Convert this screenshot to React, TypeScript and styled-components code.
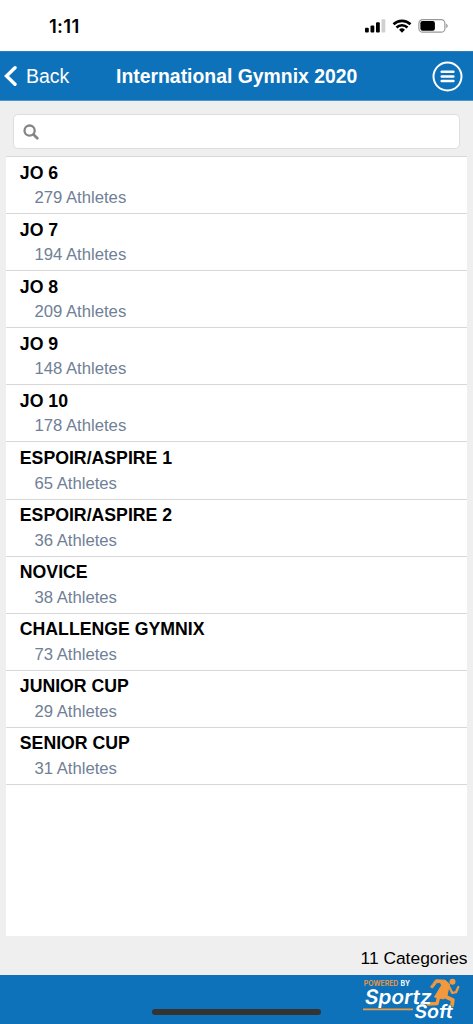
import React from "react";
import styled, { createGlobalStyle } from "styled-components";

const GlobalStyle = createGlobalStyle`
  * { box-sizing: border-box; }
  body { margin: 0; background: #efefef; }
`;

const Screen = styled.div`
  width: 473px;
  height: 1024px;
  display: flex;
  flex-direction: column;
  overflow: hidden;
  background: #efefef;
  font-family: "Liberation Sans", Arial, sans-serif;
  color: #000;
`;

const StatusBar = styled.div`
  flex: none;
  height: 51px;
  display: flex;
  justify-content: space-between;
  padding: 15px 24px 0 49px;
  background: #fff;
`;

const Clock = styled.span`
  font: 600 18.5px/22px Inter, sans-serif;
  letter-spacing: 0.3px;
`;

const StatusIcons = styled.svg`
  display: block;
  width: 85px;
  height: 22px;
`;

const NavBar = styled.header`
  flex: none;
  height: 50px;
  display: flex;
  align-items: center;
  background: #0d72b9;
  border-top: 1px solid #2f7db5;
  border-bottom: 1px solid #4b97cc;
  color: #fff;
`;

const BackButton = styled.button`
  width: 116px;
  display: flex;
  align-items: center;
  gap: 9px;
  padding: 0 0 0 4px;
  border: 0;
  background: none;
  color: inherit;
  font: 19.5px/24px "Liberation Sans", Arial, sans-serif;
`;

const Title = styled.h1`
  flex: 1;
  margin: 0;
  white-space: nowrap;
  font-size: 19.4px;
  line-height: 24px;
  font-weight: 700;
`;

const MenuButton = styled.button`
  margin: 0 10px 0 0;
  padding: 0;
  border: 0;
  background: none;
  line-height: 0;
`;

const SearchArea = styled.div`
  flex: none;
  height: 55px;
  padding: 13px 13px 0;
`;

const SearchBox = styled.label`
  height: 35px;
  display: flex;
  align-items: center;
  padding-left: 9px;
  background: #fff;
  border: 1px solid #dedede;
  border-radius: 5px;
`;

const List = styled.ul`
  flex: none;
  height: 780px;
  margin: 0 6px;
  padding: 0;
  list-style: none;
  background: #fff;
  border-top: 1px solid #d8d8d8;
`;

const Row = styled.li`
  height: 57.1px;
  padding: 4.5px 0 0 13.8px;
  border-bottom: 1px solid #d8d8d8;
`;

const Name = styled.div`
  font-size: 17.7px;
  line-height: 22px;
  font-weight: 700;
`;

const Count = styled.div`
  padding: 4.6px 0 0 14.6px;
  font-size: 16.7px;
  line-height: 20px;
  color: #708096;
`;

const Summary = styled.div`
  flex: none;
  height: 39px;
  padding: 11px 5.5px 0 0;
  text-align: right;
  font-size: 17.4px;
  line-height: 22px;
`;

const Footer = styled.footer`
  flex: none;
  position: relative;
  height: 49px;
  display: flex;
  justify-content: flex-end;
  padding-right: 11px;
  background: #0d72b9;
`;

const HomeIndicator = styled.div`
  position: absolute;
  left: 152px;
  bottom: 9px;
  width: 169px;
  height: 6px;
  border-radius: 3px;
  background: #333;
`;

const categories: [string, number][] = [
  ["JO 6", 279],
  ["JO 7", 194],
  ["JO 8", 209],
  ["JO 9", 148],
  ["JO 10", 178],
  ["ESPOIR/ASPIRE 1", 65],
  ["ESPOIR/ASPIRE 2", 36],
  ["NOVICE", 38],
  ["CHALLENGE GYMNIX", 73],
  ["JUNIOR CUP", 29],
  ["SENIOR CUP", 31],
];

const PhoneStatus = () => (
  <StatusIcons viewBox="0 0 85 22">
    <rect x="1" y="12.7" width="3.8" height="4.8" rx="1" />
    <rect x="6.5" y="10.5" width="3.8" height="7" rx="1" />
    <rect x="12" y="7.2" width="3.8" height="10.3" rx="1" />
    <rect x="17.5" y="4.3" width="3.8" height="13.2" rx="1" fill="#d0d0d0" />
    <g fill="none" stroke="#000" strokeWidth="2.6">
      <path d="M29.5 9.3a12.2 12.2 0 0 1 17 0" />
      <path d="M32.5 12.5a7.9 7.9 0 0 1 11 0" />
    </g>
    <path d="M38 17.7l-2.9-3a4.2 4.2 0 0 1 5.8 0z" />
    <rect x="54.9" y="4.6" width="26" height="12.6" rx="3.8" fill="#fff" stroke="#999" strokeWidth="1.2" />
    <rect x="56.4" y="6.1" width="14.5" height="9.6" rx="2.2" />
    <path d="M82.2 8.7c2 .7 2 3.7 0 4.4z" fill="#999" />
  </StatusIcons>
);

const Logo = () => (
  <svg width="102" height="49" viewBox="0 0 102 49">
    <g fill="#f2993d" stroke="#f2993d" strokeLinejoin="round" strokeLinecap="round">
      <circle cx="92.5" cy="6.8" r="3" stroke="none" />
      <path d="M76 4.8L85 5.2L89.5 9L87 20.5L83.5 24L74.5 22L81.5 10.5L80.5 7.6L76.8 7.6L72.5 13L70.8 12.2Z" strokeWidth="1" />
      <path d="M88.5 10.5L92.3 18L96 17.2L98.3 12" fill="none" strokeWidth="2.3" />
      <path d="M83 20.5L92.8 25L92 30.5" fill="none" strokeWidth="3.8" />
      <path d="M78.5 22.5L77 28.5L68 29" fill="none" strokeWidth="3.4" />
    </g>
    <path d="M3 34.3H53" stroke="#f2993d" strokeWidth="1.7" />
    <text x="3.8" y="11.3" fill="#f2993d" fontFamily="Inter, sans-serif" fontSize="7" fontWeight="600" textLength="34.5" lengthAdjust="spacingAndGlyphs">POWERED</text>
    <text x="40.5" y="11.3" fill="#fff" fontFamily="Inter, sans-serif" fontSize="7" fontWeight="700" textLength="9.5" lengthAdjust="spacingAndGlyphs">BY</text>
    <g fill="#fff" fontFamily="Inter, sans-serif" fontWeight="600">
      <text transform="translate(4 28.8) skewX(-9)" fontSize="20" textLength="67" lengthAdjust="spacingAndGlyphs">Sportz</text>
      <text transform="translate(53.5 43.3) skewX(-9)" fontSize="18.5" textLength="38.5" lengthAdjust="spacingAndGlyphs" stroke="#0d72b9" strokeWidth="1" paintOrder="stroke">Soft</text>
    </g>
  </svg>
);

export default function App() {
  return (
    <>
      <GlobalStyle />
      <Screen>
        <StatusBar>
          <Clock>1:11</Clock>
          <PhoneStatus />
        </StatusBar>
        <NavBar>
          <BackButton>
            <svg width="13" height="22" viewBox="0 0 13 22">
              <path d="M11 2.7L2.5 11L11 19.3" fill="none" stroke="#fff" strokeWidth="3.4" strokeLinecap="round" />
            </svg>
            Back
          </BackButton>
          <Title>International Gymnix 2020</Title>
          <MenuButton aria-label="Menu">
            <svg width="31" height="31" viewBox="0 0 31 31" fill="none" stroke="#fff">
              <circle cx="15.5" cy="15.5" r="14" strokeWidth="2" />
              <path d="M9.7 10.7H21.4M9.7 15.4H21.4M9.7 20.1H21.4" strokeWidth="2.5" strokeLinecap="round" />
            </svg>
          </MenuButton>
        </NavBar>
        <SearchArea>
          <SearchBox>
            <svg width="16" height="16" viewBox="0 0 16 16" fill="none" stroke="#858585">
              <circle cx="6.6" cy="6.6" r="5.1" strokeWidth="2.3" />
              <path d="M10.5 10.5L14.3 14.3" strokeWidth="2.7" strokeLinecap="round" />
            </svg>
          </SearchBox>
        </SearchArea>
        <List>
          {categories.map(([name, athletes]) => (
            <Row key={name}>
              <Name>{name}</Name>
              <Count>{athletes} Athletes</Count>
            </Row>
          ))}
        </List>
        <Summary>{categories.length} Categories</Summary>
        <Footer>
          <HomeIndicator />
          <Logo />
        </Footer>
      </Screen>
    </>
  );
}
